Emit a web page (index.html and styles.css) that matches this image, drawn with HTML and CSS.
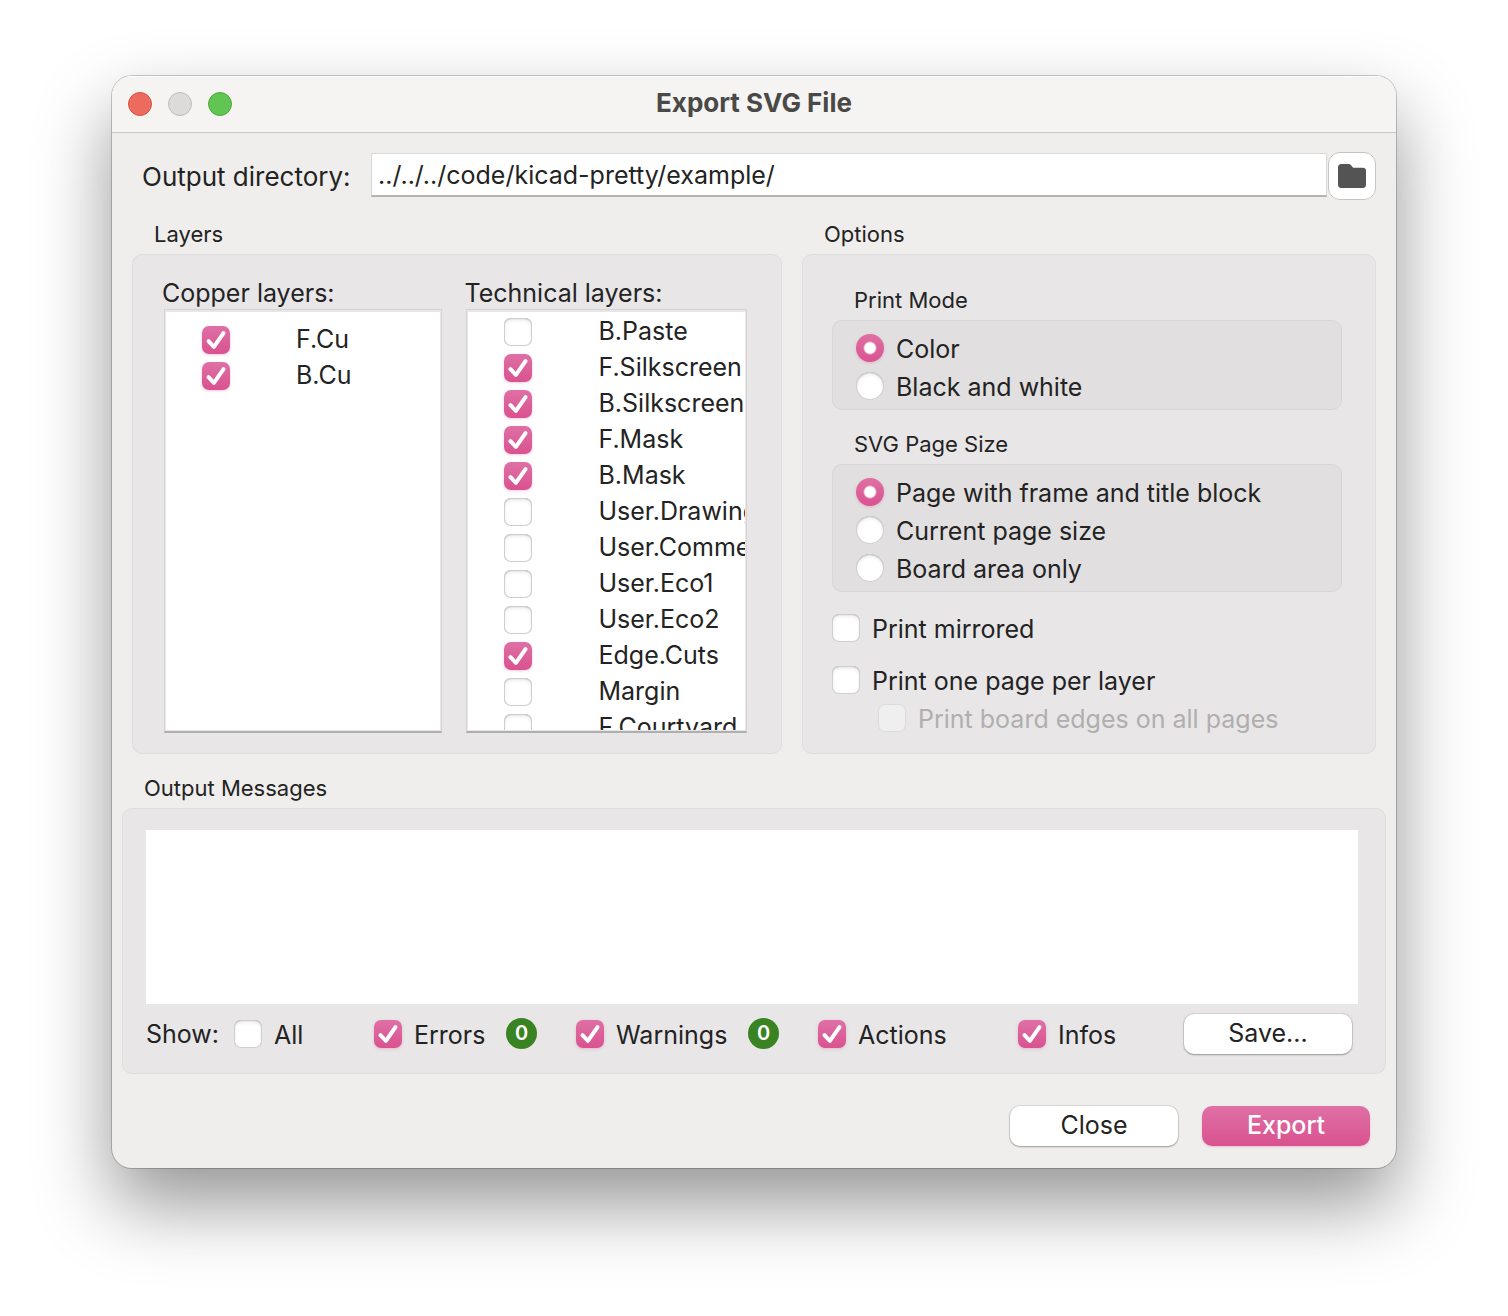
FILE: index.html
```html
<!DOCTYPE html>
<html lang="en">
<head>
<meta charset="utf-8">
<meta name="viewport" content="width=device-width, initial-scale=1">
<title>Export SVG File</title>
<link rel="stylesheet" href="styles.css">
</head>
<body>
<main class="dialog">
  <header class="titlebar">
    <div class="lights">
      <button type="button" class="light light-close" aria-label="Close window"></button>
      <button type="button" class="light light-minimize" aria-label="Minimize window" disabled></button>
      <button type="button" class="light light-zoom" aria-label="Zoom window"></button>
    </div>
    <h1 class="title">Export SVG File</h1>
  </header>

  <form class="content">
    <div class="directory">
      <label class="directory-label" for="directory">Output directory:</label>
      <input class="directory-input" id="directory" type="text" value="../../../code/kicad-pretty/example/">
      <button type="button" class="browse" aria-label="Browse for directory">
        <svg class="browse-icon" viewBox="0 0 30 26" aria-hidden="true"><path d="M4.500 1H11.500Q13 1 14 2.200L16.200 4.800H25.500Q29 4.800 29 8V21.500Q29 25 25.500 25H4.500Q1 25 1 21.500V4.500Q1 1 4.500 1Z"/></svg>
      </button>
    </div>

    <div class="panels">
      <section class="group">
        <h2 class="group-title">Layers</h2>
        <div class="box layers-box">
          <div class="column">
            <h3 class="column-title">Copper layers:</h3>
            <div class="list">
              <ul class="list-view list-view-top">
                <li><label class="layer"><input class="check" type="checkbox" checked><span>F.Cu</span></label></li>
                <li><label class="layer"><input class="check" type="checkbox" checked><span>B.Cu</span></label></li>
              </ul>
            </div>
          </div>
          <div class="column">
            <h3 class="column-title">Technical layers:</h3>
            <div class="list">
              <ul class="list-view">
                <li><label class="layer"><input class="check" type="checkbox"><span>B.Paste</span></label></li>
                <li><label class="layer"><input class="check" type="checkbox" checked><span>F.Silkscreen</span></label></li>
                <li><label class="layer"><input class="check" type="checkbox" checked><span>B.Silkscreen</span></label></li>
                <li><label class="layer"><input class="check" type="checkbox" checked><span>F.Mask</span></label></li>
                <li><label class="layer"><input class="check" type="checkbox" checked><span>B.Mask</span></label></li>
                <li><label class="layer"><input class="check" type="checkbox"><span>User.Drawings</span></label></li>
                <li><label class="layer"><input class="check" type="checkbox"><span>User.Comments</span></label></li>
                <li><label class="layer"><input class="check" type="checkbox"><span>User.Eco1</span></label></li>
                <li><label class="layer"><input class="check" type="checkbox"><span>User.Eco2</span></label></li>
                <li><label class="layer"><input class="check" type="checkbox" checked><span>Edge.Cuts</span></label></li>
                <li><label class="layer"><input class="check" type="checkbox"><span>Margin</span></label></li>
                <li><label class="layer"><input class="check" type="checkbox"><span>F.Courtyard</span></label></li>
              </ul>
            </div>
          </div>
        </div>
      </section>

      <section class="group">
        <h2 class="group-title">Options</h2>
        <div class="box options-box">
          <section class="group" role="radiogroup" aria-labelledby="mode-title">
            <h3 class="group-title" id="mode-title">Print Mode</h3>
            <div class="box choices">
              <label class="option"><input class="radio" type="radio" name="mode" checked>Color</label>
              <label class="option"><input class="radio" type="radio" name="mode">Black and white</label>
            </div>
          </section>
          <section class="group" role="radiogroup" aria-labelledby="size-title">
            <h3 class="group-title" id="size-title">SVG Page Size</h3>
            <div class="box choices">
              <label class="option"><input class="radio" type="radio" name="size" checked>Page with frame and title block</label>
              <label class="option"><input class="radio" type="radio" name="size">Current page size</label>
              <label class="option"><input class="radio" type="radio" name="size">Board area only</label>
            </div>
          </section>
          <div class="toggles">
            <label class="option"><input class="check" type="checkbox">Print mirrored</label>
            <div>
              <label class="option"><input class="check" type="checkbox">Print one page per layer</label>
              <label class="option option-nested"><input class="check" type="checkbox" disabled>Print board edges on all pages</label>
            </div>
          </div>
        </div>
      </section>
    </div>

    <section class="group">
      <h2 class="group-title" id="messages-title">Output Messages</h2>
      <div class="box messages-box">
        <textarea class="messages" aria-labelledby="messages-title" readonly></textarea>
        <div class="filters">
          <span>Show:</span>
          <label class="option"><input class="check" type="checkbox">All</label>
          <label class="option"><input class="check" type="checkbox" checked>Errors</label>
          <span class="badge">0</span>
          <label class="option"><input class="check" type="checkbox" checked>Warnings</label>
          <span class="badge">0</span>
          <label class="option"><input class="check" type="checkbox" checked>Actions</label>
          <label class="option"><input class="check" type="checkbox" checked>Infos</label>
          <button type="button" class="button">Save...</button>
        </div>
      </div>
    </section>

    <footer class="actions">
      <button type="button" class="button">Close</button>
      <button type="submit" class="button button-primary">Export</button>
    </footer>
  </form>
</main>
</body>
</html>
```
FILE: styles.css
```css
* {
  box-sizing: border-box;
}

body {
  margin: 0;
  padding: 76px 112px 148px;
  background: #fff;
  color: #232323;
  font: 25px/32px Inter, "Liberation Sans", sans-serif;
}

h1,
h2,
h3,
ul {
  margin: 0;
  padding: 0;
  font: inherit;
  list-style: none;
}

input,
textarea,
button {
  margin: 0;
  padding: 0;
  border: 0;
  color: inherit;
  font: inherit;
}

.dialog {
  min-width: 1200px;
  overflow: hidden;
  border-radius: 20px;
  background: #efeeec;
  box-shadow: 0 0 0 1px rgba(0, 0, 0, 0.2), 0 36px 76px rgba(0, 0, 0, 0.42);
}

/* Title bar */

.titlebar {
  display: grid;
  grid-template-columns: 1fr auto 1fr;
  align-items: center;
  height: 57px;
  padding: 0 16px;
  border-bottom: 1px solid #c9c8c7;
  background: #f5f4f2;
  box-shadow: inset 0 1px #fff;
}

.lights {
  display: flex;
  gap: 16px;
}

.light {
  width: 24px;
  height: 24px;
  border: 1px solid #d35449;
  border-radius: 50%;
  background: #ec6a5e;
}

.light-minimize {
  border-color: #bcbbba;
  background: #dcdbda;
}

.light-zoom {
  border-color: #4fa73f;
  background: #61c554;
}

.title {
  padding-bottom: 2px;
  color: #4a4947;
  font-size: 26px;
  font-weight: 700;
}

/* Form */

.content {
  display: flex;
  flex-direction: column;
  gap: 20px;
  padding: 19px 10px 22px;
}

.directory {
  display: flex;
  align-items: center;
  margin: 0 10px;
}

.directory-label {
  width: 239px;
  padding: 2px 0 0 10px;
  font-size: 26px;
}

.directory-input {
  flex: 1;
  min-width: 0;
  height: 44px;
  margin: 0 1px 2px 0;
  padding: 0 6px;
  border: 1px solid #dad9d8;
  border-bottom: 2px solid #b4b3b2;
  background: #fff;
}

.browse {
  display: grid;
  place-items: center;
  width: 48px;
  height: 48px;
  border: 1px solid #c6c5c4;
  border-radius: 12px;
  background: #fff;
}

.browse-icon {
  width: 30px;
  height: 26px;
  fill: #545454;
}

.panels {
  display: grid;
  grid-template-columns: 650fr 574fr;
  gap: 20px;
  margin: 0 10px;
}

.group {
  display: flex;
  flex-direction: column;
  gap: 6px;
}

.group-title {
  padding-left: 22px;
  font-size: 22px;
  line-height: 28px;
}

.box {
  flex: 1;
  border: 1px solid #dedddd;
  border-radius: 10px;
  background: #e8e6e7;
}

/* Layer lists */

.layers-box {
  display: grid;
  grid-template-columns: 280fr 282fr;
  gap: 22px;
  padding: 22px 34px 20px 29px;
}

.column {
  min-width: 0;
}

.list {
  height: 424px;
  margin-left: 2px;
  padding: 2px 1px 1px;
  border: 1px solid #d5d4d4;
  border-bottom: 2px solid #b0afaf;
}

.list-view {
  height: 100%;
  overflow: hidden;
  padding: 2px 0 0 36px;
  background: #fff;
}

.list-view-top {
  padding-top: 10px;
}

.layer {
  display: flex;
  align-items: center;
  gap: 66px;
  height: 36px;
  white-space: nowrap;
}

.layer span {
  padding-bottom: 2px;
}

/* Options */

.options-box {
  display: flex;
  flex-direction: column;
  gap: 20px;
  padding: 31px 33px 16px 29px;
}

.choices {
  padding: 8px 23px 4px;
  border-color: #d7d5d6;
  background: #e1dfe0;
}

.option {
  display: flex;
  align-items: center;
  gap: 12px;
  height: 38px;
  padding-top: 2px;
  white-space: nowrap;
}

.option .check,
.option .radio {
  margin-bottom: 2px;
}

.option-nested {
  padding-left: 46px;
  color: #b0aeaf;
}

.toggles {
  display: flex;
  flex-direction: column;
  gap: 14px;
  margin-top: -3px;
}

/* Tick boxes and radios */

.check,
.radio {
  flex: none;
  width: 28px;
  height: 28px;
  appearance: none;
  border-radius: 7px;
  background: #fff;
  box-shadow: inset 0 0 0 1px #cfcecf, inset 0 1px 1px #b5b4b5, inset 0 2px 4px rgba(0, 0, 0, 0.1);
}

.radio {
  border-radius: 50%;
}

.check:checked,
.radio:checked {
  background: linear-gradient(#df70a6, #d9528f);
  box-shadow: 0 1px 3px rgba(217, 82, 143, 0.3);
}

.check:checked {
  background: url("data:image/svg+xml,%3Csvg xmlns='http://www.w3.org/2000/svg' viewBox='0 0 28 28'%3E%3Cpath d='M6.500 15.200 11.900 20.800 21.500 7.200' fill='none' stroke='white' stroke-width='4' stroke-linecap='round' stroke-linejoin='round'/%3E%3C/svg%3E"), linear-gradient(#df70a6, #d9528f);
}

.radio:checked {
  background: radial-gradient(circle, #fff 5px, transparent 7px), linear-gradient(#df70a6, #d9528f);
}

.check:disabled {
  background: #f0eff0;
  box-shadow: inset 0 0 0 1px #dcdbdb;
}

/* Messages */

.messages-box {
  display: flex;
  flex-direction: column;
  gap: 10px;
  padding: 21px 27px 19px 23px;
}

.messages {
  display: block;
  width: 100%;
  height: 174px;
  resize: none;
  background: #fff;
}

.filters {
  display: grid;
  grid-template-columns: 88fr 140fr 132fr 70fr 172fr 70fr 200fr 166fr 168px;
  align-items: center;
  height: 40px;
  padding-right: 6px;
}

.badge {
  width: 31px;
  height: 31px;
  margin-bottom: 2px;
  border-radius: 50%;
  background: #3a8323;
  color: #fff;
  font-size: 20px;
  font-weight: 600;
  line-height: 31px;
  text-align: center;
}

/* Buttons */

.actions {
  display: flex;
  justify-content: flex-end;
  gap: 24px;
  margin: 12px 16px 0;
}

.button {
  width: 168px;
  height: 40px;
  padding-bottom: 2px;
  border-radius: 10px;
  background: #fff;
  box-shadow: 0 0 0 1px rgba(0, 0, 0, 0.08), 0 1px 2px rgba(0, 0, 0, 0.3);
}

.button-primary {
  background: linear-gradient(#df70a6, #d9528f);
  box-shadow: 0 1px 2px rgba(217, 82, 143, 0.3);
  color: #fff;
  font-weight: 500;
}
```
